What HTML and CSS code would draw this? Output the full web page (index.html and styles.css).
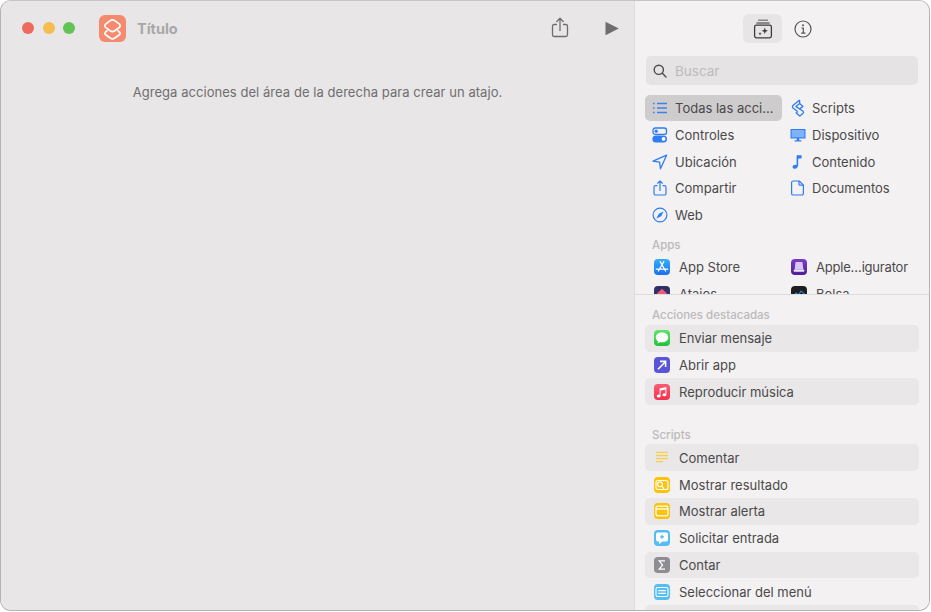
FILE: index.html
```html
<!DOCTYPE html>
<html lang="es">
	<head>
		<meta charset="UTF-8">
		<title>Atajos</title>
		<link rel="stylesheet" href="styles.css">
	</head>
	<body>
		<div class="window">
			<main class="editor">
				<header class="titlebar">
					<div class="lights">
						<span class="light light-red"></span>
						<span class="light light-yellow"></span>
						<span class="light light-green"></span>
					</div>
					<span class="app-icon">
						<svg viewBox="0 0 27 27" width="27" height="27" fill="none" stroke="#fff" stroke-width="1.7" stroke-linejoin="round">
							<path d="M8.5 15.4 6.6 17a1.9 1.9 0 0 0 0 2.8l4.6 3.2a4 4 0 0 0 4.6 0l4.6-3.2a1.9 1.9 0 0 0 0-2.8l-1.9-1.6"/>
							<path d="M11.2 5.6a4 4 0 0 1 4.6 0l4.6 3.6a2.2 2.2 0 0 1 0 3.2l-4.6 3.4a4 4 0 0 1-4.6 0l-4.6-3.4a2.2 2.2 0 0 1 0-3.2z"/>
						</svg>
					</span>
					<span class="doc-title">Título</span>
					<button class="tool tool-share" aria-label="Compartir">
						<svg viewBox="0 0 18 21" width="18" height="21" fill="none" stroke="#6f6e6f" stroke-width="1.3" stroke-linecap="round" stroke-linejoin="round">
							<path d="M5.5 7.5H3.2A1.7 1.7 0 0 0 1.5 9.2v8.6a1.7 1.7 0 0 0 1.7 1.7h11.6a1.7 1.7 0 0 0 1.7-1.7V9.2a1.7 1.7 0 0 0-1.7-1.7h-2.3"/>
							<path d="M9 13.5V1.5M5.8 4.5 9 1.3l3.2 3.2"/>
						</svg>
					</button>
					<button class="tool tool-play" aria-label="Ejecutar">
						<svg viewBox="0 0 14 15" width="14" height="15"><path d="M0.5 0.8v13.4L13.8 7.5z" fill="#6f6e6f"/></svg>
					</button>
				</header>
				<p class="hint">Agrega acciones del área de la derecha para crear un atajo.</p>
			</main>

			<aside class="library">
				<div class="library-tools">
					<button class="seg seg-on" aria-label="Biblioteca">
						<svg viewBox="0 0 20 20" width="20" height="20" fill="none" stroke="#3d3c3d" stroke-width="1.3">
							<path d="M5 1.2h10" stroke="#8a898a" stroke-width="1.4"/>
							<path d="M3.4 4h13.2" stroke="#6c6b6c" stroke-width="1.4"/>
							<rect x="1.6" y="6.2" width="16.8" height="12.6" rx="1.8"/>
							<path d="M11.8 8.6l.9 2.3 2.3.9-2.3.9-.9 2.3-.9-2.3-2.3-.9 2.3-.9z" fill="#3d3c3d" stroke="none"/>
							<path d="M7 13l.5 1.2 1.2.5-1.2.5-.5 1.2-.5-1.2-1.2-.5 1.2-.5z" fill="#3d3c3d" stroke="none"/>
						</svg>
					</button>
					<button class="seg" aria-label="Información">
						<svg viewBox="0 0 18 18" width="18" height="18" fill="none" stroke="#555455" stroke-width="1.2">
							<circle cx="9" cy="9" r="8"/>
							<circle cx="9" cy="5.2" r="1" fill="#555455" stroke="none"/>
							<path d="M7.4 8h1.9v5M7.2 13.2h4.2"/>
						</svg>
					</button>
				</div>

				<label class="search">
					<svg viewBox="0 0 14 14" width="14" height="14" fill="none" stroke="#4b4a4b" stroke-width="1.4" stroke-linecap="round">
						<circle cx="5.8" cy="5.8" r="4.6"/>
						<path d="M9.3 9.3 13 13"/>
					</svg>
					<span>Buscar</span>
				</label>

				<div class="browse">
					<ul class="cats">
						<li class="cat cat-on">
							<svg viewBox="0 0 16 16" width="16" height="16" fill="none" stroke="#3b82f0" stroke-width="1.3">
								<path d="M5 3.5h10M5 8h10M5 12.5h10"/>
								<path d="M1 3.5h1.6M1 8h1.6M1 12.5h1.6" stroke-width="1.7"/>
							</svg>
							<span>Todas las acci…</span>
						</li>
						<li class="cat">
							<svg viewBox="0 0 16 18" width="16" height="18" fill="none" stroke="#2f7df2" stroke-width="1.3" stroke-linejoin="round">
								<path d="M9.6 1 3 6.5a1.6 1.6 0 0 0 0 2.4l4.6 3.6"/>
								<path d="M9.6 1v3.6L6 7.6l6.8 4.4a1.5 1.5 0 0 1 .1 2.4L9.8 17 6.2 14l1.4-1.5"/>
								<path d="M9.6 4.6 13 7.4 9.4 10"/>
							</svg>
							<span>Scripts</span>
						</li>
						<li class="cat">
							<svg viewBox="0 0 16 16" width="16" height="16">
								<rect x="1" y="1" width="13.5" height="6.4" rx="2.2" fill="none" stroke="#2f7df2" stroke-width="1.3"/>
								<circle cx="4.2" cy="4.2" r="1.6" fill="#2f7df2"/>
								<rect x="0.4" y="8.4" width="14.6" height="7" rx="3.5" fill="#2f7df2"/>
								<circle cx="11.6" cy="11.9" r="1.9" fill="#fff"/>
							</svg>
							<span>Controles</span>
						</li>
						<li class="cat">
							<svg viewBox="0 0 16 16" width="16" height="16">
								<path d="M0.5 2h15v9.6H9.2v1.6h2.2v1.2H4.6v-1.2h2.2v-1.6H0.5z" fill="#2f7df2"/>
								<rect x="1.6" y="3" width="12.8" height="7.4" fill="#7fb2f8"/>
							</svg>
							<span>Dispositivo</span>
						</li>
						<li class="cat">
							<svg viewBox="0 0 16 16" width="16" height="16" fill="none" stroke="#2f7df2" stroke-width="1.3" stroke-linejoin="round">
								<path d="M14.6 1.2 1 7.2l6.6.9.9 6.7z"/>
							</svg>
							<span>Ubicación</span>
						</li>
						<li class="cat">
							<svg viewBox="0 0 16 16" width="16" height="16">
								<path d="M8.2 1.2v9.6c0 2-1.1 3.6-3 3.9-1.5.2-2.6-.6-2.6-1.8 0-1.3 1.2-2.1 2.8-2.1.5 0 .9.1 1.2.2V1.8z" fill="#2f7df2"/>
								<path d="M7 1.2h4.6v3L8 4.8z" fill="#2f7df2"/>
							</svg>
							<span>Contenido</span>
						</li>
						<li class="cat">
							<svg viewBox="0 0 16 16" width="16" height="16" fill="none" stroke="#2f7df2" stroke-width="1.2" stroke-linecap="round" stroke-linejoin="round">
								<path d="M5 5.6H3.6a1.6 1.6 0 0 0-1.6 1.6v6.2A1.6 1.6 0 0 0 3.6 15h8.8a1.6 1.6 0 0 0 1.6-1.6V7.2a1.6 1.6 0 0 0-1.6-1.6H11"/>
								<path d="M8 10.4V1M5.6 3.2 8 .9l2.4 2.3"/>
							</svg>
							<span>Compartir</span>
						</li>
						<li class="cat">
							<svg viewBox="0 0 16 16" width="16" height="16" fill="none" stroke="#2f7df2" stroke-width="1.2" stroke-linejoin="round">
								<path d="M3 1h6.2L13.4 5.2v8.2a1.6 1.6 0 0 1-1.6 1.6H3.2a1.6 1.6 0 0 1-1.6-1.6V2.6A1.6 1.6 0 0 1 3 1z"/>
								<path d="M9 1v3.2a1 1 0 0 0 1 1h3.4"/>
							</svg>
							<span>Documentos</span>
						</li>
						<li class="cat">
							<svg viewBox="0 0 16 16" width="16" height="16">
								<circle cx="8" cy="8" r="6.9" fill="none" stroke="#2f7df2" stroke-width="1.2"/>
								<path d="M11.6 4.4 9.2 9.2 4.4 11.6l2.4-4.8z" fill="#2f7df2"/>
							</svg>
							<span>Web</span>
						</li>
					</ul>

					<h2 class="group-title">Apps</h2>
					<ul class="apps">
						<li class="app">
							<span class="tile tile-store">
								<svg viewBox="0 0 14 14" width="14" height="14" fill="none" stroke="#fff" stroke-width="1.2" stroke-linecap="round">
									<path d="M8.8 1.6 3.4 11M5.2 1.6l5.4 9.4M1.2 9.2h11.6"/>
								</svg>
							</span>
							<span>App Store</span>
						</li>
						<li class="app">
							<span class="tile tile-config">
								<svg viewBox="0 0 14 14" width="14" height="14">
									<path d="M3.6 2h6.8l1 7.6H2.6z" fill="#d9c6f3"/>
									<rect x="1.6" y="9.6" width="10.8" height="2.2" rx="1" fill="#f1e9fb"/>
								</svg>
							</span>
							<span class="app-tight">Apple…igurator</span>
						</li>
						<li class="app">
							<span class="tile tile-shortcuts">
								<svg viewBox="0 0 14 14" width="14" height="14"><path d="M7 1.8 12 6.4 7 11 2 6.4z" fill="#ef5a6f"/></svg>
							</span>
							<span>Atajos</span>
						</li>
						<li class="app">
							<span class="tile tile-stocks">
								<svg viewBox="0 0 14 14" width="14" height="14" fill="none" stroke="#3c7fc4" stroke-width="1.1"><path d="M1 9.5 4 6l2.5 2L9 4l4 3.5"/></svg>
							</span>
							<span>Bolsa</span>
						</li>
					</ul>
				</div>

				<div class="actions">
					<h2 class="group-title first">Acciones destacadas</h2>
					<ul class="action-list">
						<li class="action">
							<span class="tile tile-messages">
								<svg viewBox="0 0 14 14" width="14" height="14"><path d="M7 1.6c3.5 0 6.2 2.1 6.2 4.8S10.500 11.200 7 11.200c-.6 0-1.200-.1-1.700-.2-.8.7-1.900 1.200-3.100 1.300.6-.6 1-1.300 1.100-2C1.700 9.400.8 8 .8 6.400.8 3.700 3.500 1.600 7 1.600z" fill="#fff"/></svg>
							</span>
							<span>Enviar mensaje</span>
						</li>
						<li class="action">
							<span class="tile tile-open">
								<svg viewBox="0 0 14 14" width="14" height="14" fill="none" stroke="#fff" stroke-width="1.6"><path d="M3 11.200 10.400 3.800M5 3.400h5.600V9"/></svg>
							</span>
							<span>Abrir app</span>
						</li>
						<li class="action">
							<span class="tile tile-music">
								<svg viewBox="0 0 14 14" width="14" height="14" fill="#fff">
									<path d="M4.600 3.400 11.400 2v7.800h-1V4.400l-4.800 1v5.800h-1z"/>
									<ellipse cx="3.600" cy="11" rx="1.900" ry="1.500"/>
									<ellipse cx="9.400" cy="9.800" rx="1.900" ry="1.500"/>
								</svg>
							</span>
							<span>Reproducir música</span>
						</li>
					</ul>

					<h2 class="group-title second">Scripts</h2>
					<ul class="action-list">
						<li class="action">
							<span class="tile tile-plain">
								<svg viewBox="0 0 18 18" width="18" height="18" stroke="#f8cf4d" stroke-width="1.300"><path d="M3 3.400h12M3 6.500h12M3 9.600h12M3 12.700h7"/></svg>
							</span>
							<span>Comentar</span>
						</li>
						<li class="action">
							<span class="tile tile-yellow">
								<svg viewBox="0 0 14 14" width="14" height="14" fill="none" stroke="#fff" stroke-width="1.200">
									<rect x="1" y="2.500" width="12" height="9" rx="2"/>
									<circle cx="5" cy="6.300" r="2.400"/>
									<path d="M6.800 8.100 9 11"/>
								</svg>
							</span>
							<span>Mostrar resultado</span>
						</li>
						<li class="action">
							<span class="tile tile-yellow">
								<svg viewBox="0 0 14 14" width="14" height="14" fill="none" stroke="#fff" stroke-width="1.300">
									<rect x="1" y="2.200" width="12" height="9.600" rx="1.800"/>
									<path d="M1 5h12"/>
								</svg>
							</span>
							<span>Mostrar alerta</span>
						</li>
						<li class="action">
							<span class="tile tile-sky">
								<svg viewBox="0 0 14 14" width="14" height="14">
									<path d="M2.800 1.500h8.400A1.800 1.800 0 0 1 13 3.300v5.400a1.800 1.800 0 0 1-1.800 1.800H7.400l-3.400 2.700v-2.700H2.800A1.800 1.800 0 0 1 1 8.700V3.300a1.800 1.800 0 0 1 1.800-1.800z" fill="#fff"/>
									<path d="M7 3.800v4M5 5.800h4" stroke="#4fb9ee" stroke-width="1.200"/>
								</svg>
							</span>
							<span>Solicitar entrada</span>
						</li>
						<li class="action">
							<span class="tile tile-gray">
								<svg viewBox="0 0 14 14" width="14" height="14" fill="none" stroke="#fff" stroke-width="1.200"><path d="M10 2.800H4.200L7.600 7l-3.400 4.200H10"/></svg>
							</span>
							<span>Contar</span>
						</li>
						<li class="action">
							<span class="tile tile-sky">
								<svg viewBox="0 0 14 14" width="14" height="14" fill="none" stroke="#fff" stroke-width="1.100">
									<rect x="1" y="2.500" width="12" height="9" rx="1.600"/>
									<path d="M3.200 5.600h7.600M3.200 8.400h7.600" stroke-width="1.400"/>
								</svg>
							</span>
							<span>Seleccionar del menú</span>
						</li>
						<li class="action"></li>
					</ul>
				</div>
			</aside>
		</div>
	</body>
</html>
```

FILE: styles.css
```css
* {
	box-sizing: border-box;
}
html,
body {
	margin: 0;
	height: 100%;
}
body {
	background: #fff;
	font-family: "Inter", "Liberation Sans", sans-serif;
	font-size: 13px;
	color: #4a494a;
	overflow: hidden;
}
ul {
	list-style: none;
	margin: 0;
	padding: 0;
}
button {
	border: 0;
	background: none;
	padding: 0;
	display: flex;
	align-items: center;
	justify-content: center;
}

.window {
	display: flex;
	width: 930px;
	height: 611px;
	border: 1px solid #b4b3b3;
	border-top-color: #c4c6c4;
	border-radius: 11px;
	overflow: hidden;
}

/* left side */
.editor {
	flex: 0 0 634px;
	background: #e8e6e7;
	border-right: 1px solid #dfdddd;
}
.titlebar {
	display: flex;
	align-items: center;
	height: 54px;
	padding-left: 21px;
}
.lights {
	display: flex;
	gap: 8.5px;
}
.light {
	width: 12px;
	height: 12px;
	border-radius: 50%;
}
.light-red {
	background: #ee6a5f;
}
.light-yellow {
	background: #f5bd4f;
}
.light-green {
	background: #61c454;
}
.app-icon {
	display: flex;
	width: 27px;
	height: 27px;
	margin-left: 24px;
	border-radius: 6px;
	background: #f58a6e;
}
.doc-title {
	margin-left: 11px;
	font-size: 14.5px;
	font-weight: 700;
	color: #a9a7a8;
}
.tool-share {
	margin-left: auto;
	margin-bottom: 2px;
}
.tool-play {
	margin-left: 36px;
	margin-right: 15px;
}
.hint {
	margin: 26px 0 0;
	text-align: center;
	line-height: 22px;
	letter-spacing: 0.05px;
	color: #6f6e6f;
}

/* right side */
.library {
	flex: 1;
	display: flex;
	flex-direction: column;
	min-width: 0;
	background: #f3f1f2;
}
.library-tools {
	display: flex;
	justify-content: center;
	gap: 1px;
	height: 55px;
	padding: 13px 0 0 1px;
}
.seg {
	width: 39px;
	height: 29px;
	border-radius: 6px;
}
.seg-on {
	background: #e7e5e6;
}
.search {
	display: flex;
	align-items: center;
	gap: 8px;
	height: 29px;
	margin: 0 11px;
	padding-left: 7px;
	border-radius: 5px;
	background: #e5e3e4;
	color: #bdbbbc;
	font-size: 13.5px;
}
.browse {
	flex: 0 0 210px;
	overflow: hidden;
	padding: 9.6px 10px 0;
	border-bottom: 1px solid #dcdadb;
}
.cats {
	display: grid;
	grid-template-columns: 137px 1fr;
}
.cat {
	display: flex;
	align-items: center;
	gap: 7px;
	height: 26.8px;
	padding-left: 7px;
	white-space: nowrap;
}
.cat:nth-child(even) {
	gap: 6px;
	padding-left: 8px;
}
.cat svg {
	flex: none;
}
.cat-on {
	border-radius: 5px;
	background: #cfcccd;
}
.group-title {
	margin: 0;
	font-size: 11.5px;
	font-weight: 500;
	line-height: 14px;
	color: #bcbabb;
	padding-left: 7px;
}
.browse .group-title {
	margin-top: 9.4px;
	margin-bottom: 1.6px;
}
.apps {
	display: grid;
	grid-template-columns: 137px 1fr;
}
.app {
	display: flex;
	align-items: center;
	gap: 9px;
	height: 27px;
	padding-left: 9px;
	white-space: nowrap;
}
.app-tight {
	letter-spacing: -0.2px;
}
.tile {
	flex: none;
	display: flex;
	align-items: center;
	justify-content: center;
	width: 16px;
	height: 16px;
	border-radius: 4px;
}
.tile svg {
	flex: none;
}
.tile-store {
	background: linear-gradient(#35aef8, #1c6ff0);
}
.tile-config {
	background: linear-gradient(#7a3fc6, #4b1f96);
}
.tile-shortcuts {
	background: linear-gradient(#2c2f66, #3d2f7c);
}
.tile-stocks {
	background: #1d1e22;
}
.tile-messages {
	background: linear-gradient(#5fe36d, #22c23a);
}
.tile-open {
	background: #5a55d8;
}
.tile-music {
	background: linear-gradient(#fb5c74, #f5304c);
}
.tile-plain {
	background: none;
}
.tile-yellow {
	background: #fdc30a;
}
.tile-sky {
	background: #54bdf3;
}
.tile-gray {
	background: #8e8d92;
}

.actions {
	flex: 1;
	min-height: 0;
	overflow: hidden;
	padding: 0 10px;
}
.actions .group-title.first {
	margin-top: 13px;
	margin-bottom: 2.9px;
}
.actions .group-title.second {
	margin-top: 23.1px;
	margin-bottom: 2px;
}
.action {
	display: flex;
	align-items: center;
	gap: 9px;
	height: 26.8px;
	padding-left: 9px;
	border-radius: 5px;
}
.action:nth-child(odd) {
	background: #e9e7e8;
}
```
